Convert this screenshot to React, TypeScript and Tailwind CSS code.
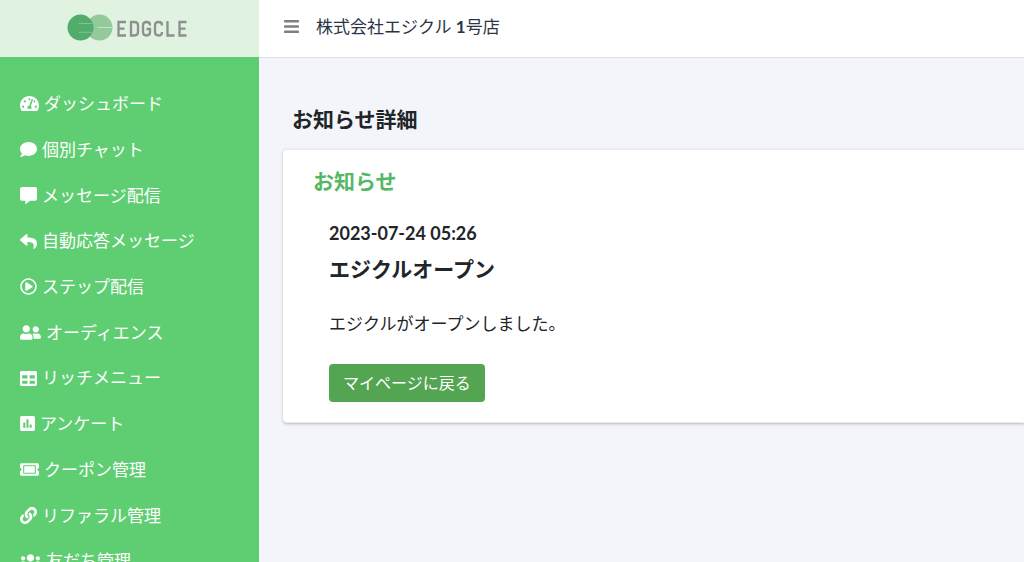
import type { IconType } from "react-icons";
import {
  FaBars,
  FaComment,
  FaCommentAlt,
  FaLink,
  FaPoll,
  FaRegPlayCircle,
  FaReply,
  FaTable,
  FaTachometerAlt,
  FaTicketAlt,
  FaUserFriends,
  FaUsers,
} from "react-icons/fa";

const menu: { label: string; icon: IconType; width: string }[] = [
  { label: "ダッシュボード", icon: FaTachometerAlt, width: "w-[19px]" },
  { label: "個別チャット", icon: FaComment, width: "w-[17px]" },
  { label: "メッセージ配信", icon: FaCommentAlt, width: "w-[17px]" },
  { label: "自動応答メッセージ", icon: FaReply, width: "w-[17px]" },
  { label: "ステップ配信", icon: FaRegPlayCircle, width: "w-[17px]" },
  { label: "オーディエンス", icon: FaUserFriends, width: "w-[21px]" },
  { label: "リッチメニュー", icon: FaTable, width: "w-[17px]" },
  { label: "アンケート", icon: FaPoll, width: "w-[15px]" },
  { label: "クーポン管理", icon: FaTicketAlt, width: "w-[19px]" },
  { label: "リファラル管理", icon: FaLink, width: "w-[17px]" },
  { label: "友だち管理", icon: FaUsers, width: "w-[21px]" },
];

function Logo() {
  return (
    <svg viewBox="0 0 122 29" className="h-[29px] w-[122px]" role="img" aria-label="EDGCLE">
      <circle cx="32.5" cy="13.6" r="13" fill="#94c99b" />
      <circle cx="13.5" cy="13.6" r="13" fill="#52ac6c" />
      <path d="M11.500 9.500H25.500M11.500 18.300H25.500" stroke="#80c392" strokeWidth="1" />
      <path d="M30.500 13.500H45" stroke="#c5e5c9" strokeWidth="1" />
      <g fill="none" stroke="#8f8f8f" strokeWidth="2.300">
        <path d="M59 8H51.500V21.500H59M51.500 14.600H57.500" />
        <path d="M64 8H67.500Q71 8 71 11.500V18Q71 21.500 67.500 21.500H64Z" />
        <path d="M83 11.500V11Q83 8 79.500 8Q76 8 76 11.500V18Q76 21.500 79.500 21.500Q83 21.500 83 18V15H79.500" />
        <path d="M95 11.500V11Q95 8 91.500 8Q88 8 88 11.500V18Q88 21.500 91.500 21.500Q95 21.500 95 18.500V18" />
        <path d="M100.500 6.900V21.500H107.500" />
        <path d="M119.500 8H112.500V21.500H119.500M112.500 14.600H118.500" />
      </g>
    </svg>
  );
}

export default function App() {
  return (
    <div className="flex h-screen overflow-hidden bg-[#f4f5fa] font-[Lato,'Noto_Sans_CJK_JP',sans-serif] text-[17px] text-[#212529]">
      <aside className="flex w-[259px] shrink-0 flex-col bg-[#5fce72]">
        <a href="#" className="flex h-[57px] shrink-0 items-center justify-center bg-[#dff3e0] pr-1">
          <Logo />
        </a>
        <nav className="pt-6">
          <ul className="grid h-[503px] auto-rows-fr">
            {menu.map(({ label, icon: Icon, width }) => (
              <li key={label} className="flex">
                <a href="#" className="flex flex-1 items-center gap-[5px] px-5 text-white">
                  <Icon className={`h-[17px] shrink-0 ${width}`} aria-hidden="true" />
                  <span className="whitespace-nowrap">{label}</span>
                </a>
              </li>
            ))}
          </ul>
        </nav>
      </aside>
      <div className="flex min-w-0 flex-1 flex-col">
        <header className="flex h-[58px] shrink-0 items-center gap-4 border-b border-[#dfe0e6] bg-white px-6 pb-1">
          <button type="button" aria-label="メニュー" className="text-[#808080]">
            <FaBars className="h-[17px] w-[17px]" />
          </button>
          <span className="text-[#2a3444]">
            株式会社エジクル <span className="font-bold">1</span>号店
          </span>
        </header>
        <main className="pt-[43px] pl-6">
          <h1 className="mb-3 pl-[9px] text-[21px] leading-9 font-bold">お知らせ詳細</h1>
          <section className="rounded-l border-y border-[#e9eaed] bg-white pt-[15px] pb-5 pl-[30px] shadow-[0_1px_3px_rgba(0,0,0,0.25)]">
            <h2 className="text-[21px] leading-8 font-bold text-[#56b866]">お知らせ</h2>
            <div className="pt-6 pl-4">
              <p className="text-[18px] leading-6 font-bold">2023-07-24 05:26</p>
              <h3 className="pt-2 text-[21px] leading-8 font-bold">エジクルオープン</h3>
              <p className="pt-[23px] leading-8">エジクルがオープンしました。</p>
              <button type="button" className="mt-6 h-[38px] rounded bg-[#54a552] px-[14px] text-[16px] text-white">
                マイページに戻る
              </button>
            </div>
          </section>
        </main>
      </div>
    </div>
  );
}
